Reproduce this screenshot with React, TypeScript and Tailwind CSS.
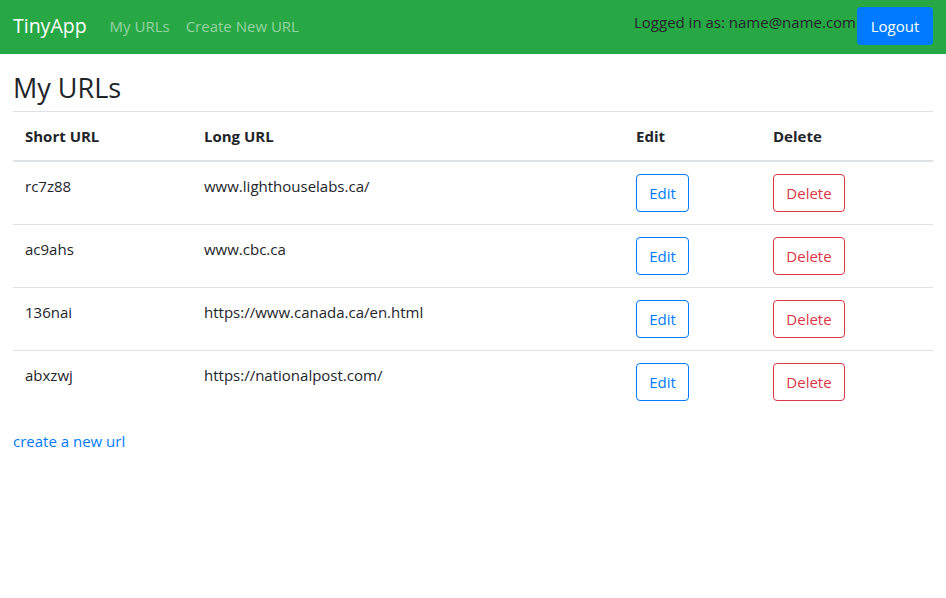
const urls = [
  { short: "rc7z88", long: "www.lighthouselabs.ca/" },
  { short: "ac9ahs", long: "www.cbc.ca" },
  { short: "136nai", long: "https://www.canada.ca/en.html" },
  { short: "abxzwj", long: "https://nationalpost.com/" },
];

export default function App() {
  return (
    <div className="min-h-screen bg-white text-[#212529] text-[15px] leading-6" style={{ fontFamily: '"Open Sans", "Noto Sans", sans-serif' }}>
      <nav className="h-[54px] bg-[#28a745] px-[13px] pb-[2px] flex items-center">
        <span className="text-white text-[19.5px] mr-[15px]">TinyApp</span>
        <a className="text-white/50 px-2">My URLs</a>
        <a className="text-white/50 px-2">Create New URL</a>
        <div className="ml-auto flex items-center">
          <span className="text-[#212529] -mt-2">Logged in as: name@name.com</span>
          <button className="h-[38px] w-[76px] bg-[#007bff] text-white rounded ml-px">Logout</button>
        </div>
      </nav>

      <div className="px-[13px] pt-[18px]">
        <h1 className="text-[27px] leading-8 mb-[7px] font-medium">My URLs</h1>
        <table className="w-full border-collapse mb-4">
          <thead>
            <tr className="border-t border-[#dee2e6] border-b-2 text-left">
              <th className="w-[179px] p-3 font-bold">Short URL</th>
              <th className="w-[432px] p-3 font-bold">Long URL</th>
              <th className="w-[137px] p-3 font-bold">Edit</th>
              <th className="p-3 font-bold">Delete</th>
            </tr>
          </thead>
          <tbody>
            {urls.map((u, i) => (
              <tr key={u.short} className={i > 0 ? "border-t border-[#dee2e6]" : ""}>
                <td className="p-3 align-top">{u.short}</td>
                <td className="p-3 align-top">{u.long}</td>
                <td className="p-3 align-top">
                  <button className="h-[38px] w-[53px] border border-[#007bff] text-[#007bff] rounded">Edit</button>
                </td>
                <td className="p-3 align-top">
                  <button className="h-[38px] w-[72px] border border-[#dc3545] text-[#dc3545] rounded">Delete</button>
                </td>
              </tr>
            ))}
          </tbody>
        </table>
        <a className="text-[#007bff]">create a new url</a>
      </div>
    </div>
  );
}
